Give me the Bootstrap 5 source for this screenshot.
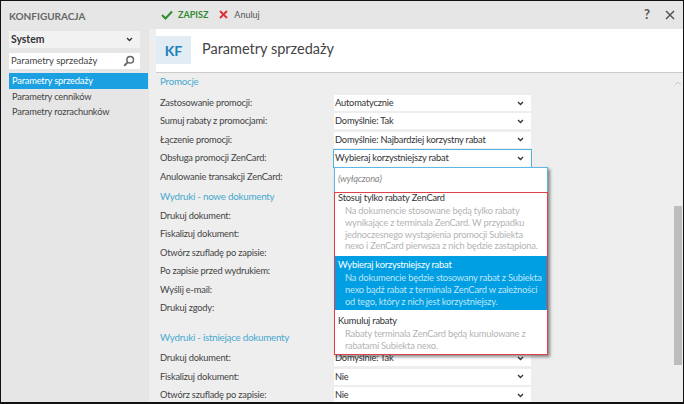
<!DOCTYPE html>
<html lang="pl"><head><meta charset="utf-8"><title>Konfiguracja</title>
<link href="https://cdn.jsdelivr.net/npm/bootstrap@5.3.0/dist/css/bootstrap.min.css" rel="stylesheet">
<style>
html,body{height:100%;margin:0;overflow:hidden}
body{font-family:"Lato","Open Sans",sans-serif;font-size:9.3px;letter-spacing:-.2px;color:#444;background:#e6e6e6}
.shell{width:684px;height:404px;border:1px solid #111;border-width:1px 1px 2px 1px;overflow:hidden;background:#e6e6e6}
.sidepane{width:148px;padding:0 0 0 8px;flex:none}
.brand{font-weight:700;font-size:10px;letter-spacing:0;color:#666;height:30px;line-height:30px}
.sysbox{width:131px;height:17px;background:#f2f2f2;font-size:10.4px;letter-spacing:0;font-weight:700;color:#333;padding:0 7px 0 2px}
.searchbox{width:131px;height:16px;background:#fff;margin-top:5px;padding:0 5px 0 2px;font-size:9.5px;letter-spacing:0;color:#444}
.navrow{width:139px;height:16px;line-height:16px;padding-left:3px;margin-top:2px;color:#444}
.navrow.picked{background:#1ba1e2;color:#fff;margin-top:4px;margin-bottom:-1px}
.navgap{height:13.5px;line-height:13.5px;margin-top:1.5px}
.toolbar{height:28px;font-size:9px;letter-spacing:0}
.savebtn{color:#2e8b2e;font-weight:700}
.cancelbtn{color:#555}
.tools{margin-left:auto;padding-right:8px;color:#555;gap:15px}
.lowerpane{background:#eee;flex:1 1 auto;min-height:0}
.headband{height:44px;background:#fff;border-bottom:1px solid #ccc;margin-left:7px;flex:none}
.kfbox{width:35px;height:28px;background:#e1ecf4;color:#1b7fc0;font-size:14px;letter-spacing:0;font-weight:700}
.pagetitle{font-size:14.5px;letter-spacing:0;color:#444;margin-left:11px;margin-bottom:2px}
.mainpane{flex:1 1 auto;position:relative;overflow:hidden}
.formcol{padding:1px 0 0 11px}
.sectitle{font-size:9.8px;letter-spacing:-.25px;color:#48a9cf;height:15px;line-height:15px}
.gapmore{margin-top:13px}
.setrow{height:18.4px}
.setlabel{width:174px;flex:none}
.fakeselect{width:197px;height:16px;padding:0 7px 0 1px;background:#fff;color:#333}
.fakeselect.opened{box-shadow:0 0 0 1px #4db2e0;height:17px}
.openlist{position:absolute;left:185px;top:94px;width:214px;height:188px;background:#fff;border:1px solid #5cb8e4;box-shadow:2px 2px 3px rgba(0,0,0,.45)}
.offitem{height:24px;line-height:21px;padding-left:3px;color:#888;font-style:italic}
.redframe{border:1px solid #e0404a;height:163px;margin:0 -1px -1px -1px}
.optitem{padding:0 2px 0 3px;line-height:11.9px;color:#333;white-space:nowrap}
.opt-a{height:63px;margin-top:-1px;padding-top:0}.opt-b{height:54px;margin-top:1px;padding-top:3px;background:#009fe3;color:#fff}.opt-c{padding-top:5px}
.optnote{padding-left:7px;margin-top:1px;color:#b4b4b4}
.opt-b .optnote{color:#bfe5f7}
.scrolltrack{position:absolute;right:0;top:0;bottom:0;width:10px}
.scrollthumb{position:absolute;left:1px;top:133px;width:8px;height:159px;background:#bdbdbd}
.scrollup{position:absolute;left:1px;top:8px}
</style></head>
<body>
<div class="shell d-flex">
 <aside class="sidepane">
  <div class="brand">KONFIGURACJA</div>
  <div class="sysbox d-flex align-items-center justify-content-between"><span>System</span>
   <svg width="7" height="5" viewBox="0 0 7 5"><path d="M1 1l2.5 2.5L6 1" fill="none" stroke="#333" stroke-width="1.3"/></svg></div>
  <div class="searchbox d-flex align-items-center justify-content-between"><span>Parametry sprzedaży</span>
   <svg width="12" height="12" viewBox="0 0 12 12"><circle cx="7.2" cy="4.8" r="3.3" fill="none" stroke="#666" stroke-width="1.5"/><path d="M4.6 7.4L1.2 10.8" stroke="#666" stroke-width="2"/></svg></div>
  <div class="navrow picked">Parametry sprzedaży</div>
  <div class="navrow navgap">Parametry cenników</div>
  <div class="navrow navgap">Parametry rozrachunków</div>
 </aside>
 <div class="flex-grow-1 d-flex flex-column" style="min-width:0">
  <div class="toolbar d-flex align-items-center">
   <svg width="12" height="10" viewBox="0 0 12 10" style="margin-left:12px"><path d="M1 5l3.5 3.5L11 1.5" fill="none" stroke="#2e8b2e" stroke-width="2"/></svg>
   <span class="savebtn" style="margin-left:5px">ZAPISZ</span>
   <svg width="9" height="9" viewBox="0 0 9 9" style="margin-left:11px"><path d="M1 1l7 7M8 1L1 8" stroke="#e0303a" stroke-width="2"/></svg>
   <span class="cancelbtn" style="margin-left:6px">Anuluj</span>
   <div class="tools d-flex align-items-center"><span style="font-size:13px;font-weight:700">?</span>
    <svg width="10" height="10" viewBox="0 0 10 10"><path d="M1 1l8 8M9 1L1 9" stroke="#555" stroke-width="1.5"/></svg></div>
  </div>
  <div class="lowerpane d-flex flex-column">
  <div class="headband d-flex align-items-center">
   <div class="kfbox d-flex align-items-center justify-content-center">KF</div>
   <div class="pagetitle">Parametry sprzedaży</div>
  </div>
  <main class="mainpane">
   <div class="formcol">
    <div class="sectitle">Promocje</div>
    <div style="height:5px"></div>
    <div class="setrow d-flex align-items-center"><div class="setlabel">Zastosowanie promocji:</div><div class="fakeselect d-flex align-items-center justify-content-between"><span>Automatycznie</span><svg width="7" height="5" viewBox="0 0 7 5"><path d="M1 1l2.5 2.5L6 1" fill="none" stroke="#333" stroke-width="1.3"/></svg></div></div>
    <div class="setrow d-flex align-items-center"><div class="setlabel">Sumuj rabaty z promocjami:</div><div class="fakeselect d-flex align-items-center justify-content-between"><span>Domyślnie: Tak</span><svg width="7" height="5" viewBox="0 0 7 5"><path d="M1 1l2.5 2.5L6 1" fill="none" stroke="#333" stroke-width="1.3"/></svg></div></div>
    <div class="setrow d-flex align-items-center"><div class="setlabel">Łączenie promocji:</div><div class="fakeselect d-flex align-items-center justify-content-between"><span>Domyślnie: Najbardziej korzystny rabat</span><svg width="7" height="5" viewBox="0 0 7 5"><path d="M1 1l2.5 2.5L6 1" fill="none" stroke="#333" stroke-width="1.3"/></svg></div></div>
    <div class="setrow d-flex align-items-center"><div class="setlabel">Obsługa promocji ZenCard:</div><div class="fakeselect opened d-flex align-items-center justify-content-between"><span>Wybieraj korzystniejszy rabat</span><svg width="7" height="5" viewBox="0 0 7 5"><path d="M1 1l2.5 2.5L6 1" fill="none" stroke="#333" stroke-width="1.3"/></svg></div></div>
    <div class="setrow d-flex align-items-center"><div class="setlabel">Anulowanie transakcji ZenCard:</div></div>
    <div class="sectitle" style="margin-top:3px">Wydruki - nowe dokumenty</div>
    <div style="height:3px"></div>
    <div class="setrow d-flex align-items-center"><div class="setlabel">Drukuj dokument:</div></div>
    <div class="setrow d-flex align-items-center"><div class="setlabel">Fiskalizuj dokument:</div></div>
    <div class="setrow d-flex align-items-center"><div class="setlabel">Otwórz szufladę po zapisie:</div></div>
    <div class="setrow d-flex align-items-center"><div class="setlabel">Po zapisie przed wydrukiem:</div></div>
    <div class="setrow d-flex align-items-center"><div class="setlabel">Wyślij e-mail:</div></div>
    <div class="setrow d-flex align-items-center"><div class="setlabel">Drukuj zgody:</div></div>
    <div class="sectitle gapmore">Wydruki - istniejące dokumenty</div>
    <div style="height:4px"></div>
    <div class="setrow d-flex align-items-center"><div class="setlabel">Drukuj dokument:</div><div class="fakeselect d-flex align-items-center justify-content-between"><span>Domyślnie: Tak</span><svg width="7" height="5" viewBox="0 0 7 5"><path d="M1 1l2.5 2.5L6 1" fill="none" stroke="#333" stroke-width="1.3"/></svg></div></div>
    <div class="setrow d-flex align-items-center"><div class="setlabel">Fiskalizuj dokument:</div><div class="fakeselect d-flex align-items-center justify-content-between"><span>Nie</span><svg width="7" height="5" viewBox="0 0 7 5"><path d="M1 1l2.5 2.5L6 1" fill="none" stroke="#333" stroke-width="1.3"/></svg></div></div>
    <div class="setrow d-flex align-items-center"><div class="setlabel">Otwórz szufladę po zapisie:</div><div class="fakeselect d-flex align-items-center justify-content-between"><span>Nie</span><svg width="7" height="5" viewBox="0 0 7 5"><path d="M1 1l2.5 2.5L6 1" fill="none" stroke="#333" stroke-width="1.3"/></svg></div></div>
   </div>
   <div class="openlist">
    <div class="offitem">(wyłączona)</div>
    <div class="redframe">
     <div class="optitem opt-a">Stosuj tylko rabaty ZenCard<div class="optnote">Na dokumencie stosowane będą tylko rabaty<br>wynikające z terminala ZenCard. W przypadku<br>jednoczesnego wystąpienia promocji Subiekta<br>nexo i ZenCard pierwsza z nich będzie zastąpiona.</div></div>
     <div class="optitem opt-b">Wybieraj korzystniejszy rabat<div class="optnote">Na dokumencie będzie stosowany rabat z Subiekta<br>nexo bądź rabat z terminala ZenCard w zależności<br>od tego, który z nich jest korzystniejszy.</div></div>
     <div class="optitem opt-c">Kumuluj rabaty<div class="optnote">Rabaty terminala ZenCard będą kumulowane z<br>rabatami Subiekta nexo.</div></div>
    </div>
   </div>
   <div class="scrolltrack">
    <svg class="scrollup" width="8" height="5" viewBox="0 0 8 5"><path d="M1 4l3-3 3 3" fill="none" stroke="#ccc"/></svg>
    <div class="scrollthumb"></div>
   </div>
  </main>
  </div>
 </div>
</div>
</body></html>
